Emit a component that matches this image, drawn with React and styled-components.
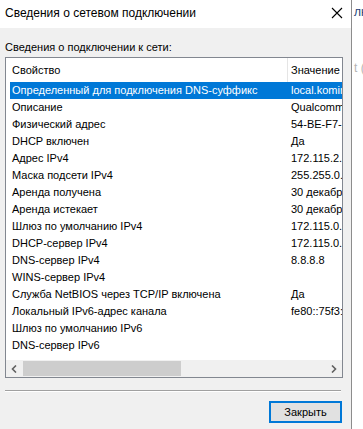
import React from 'react';
import styled, { createGlobalStyle } from 'styled-components';

const GlobalStyle = createGlobalStyle`
  html, body {
    margin: 0;
    padding: 0;
    background: #ffffff;
    overflow: hidden;
  }
  body {
    font-family: "Liberation Sans", Arial, sans-serif;
    font-size: 11px;
    color: #000;
  }
`;

const Page = styled.div`
  display: flex;
  width: 363px;
  height: 429px;
  background: #ffffff;
`;

const Dialog = styled.div`
  width: 352px;
  height: 429px;
  flex-shrink: 0;
  display: flex;
  flex-direction: column;
  background: #f0f0f0;
  border-right: 1px solid #8c8c8c;
  box-sizing: border-box;
`;

const TitleBar = styled.div`
  height: 28px;
  flex-shrink: 0;
  display: flex;
  align-items: center;
  justify-content: space-between;
  padding: 0 8px 2px 5px;
  box-sizing: border-box;
  background: #ffffff;
`;

const Title = styled.span`
  font-size: 12px;
  color: #000;
`;

const Body = styled.div`
  flex: 1;
  display: flex;
  flex-direction: column;
  padding: 12px 8px 0 5px;
`;

const Label = styled.div`
  line-height: 14px;
  margin-bottom: 3px;
`;

const ListBox = styled.div`
  width: 338px;
  height: 321px;
  box-sizing: border-box;
  border: 1px solid #828790;
  background: #ffffff;
  display: flex;
  flex-direction: column;
  overflow: hidden;
`;

const Header = styled.div`
  height: 24px;
  flex-shrink: 0;
  display: flex;
  align-items: center;
  padding-left: 4px;
`;

const Cell = styled.div`
  flex-shrink: 0;
  white-space: nowrap;
  overflow: hidden;
  box-sizing: border-box;
  width: ${({ wide }) => (wide ? '278px' : '160px')};
  padding-left: ${({ wide }) => (wide ? '2px' : '3px')};
`;

const HeaderCell = styled(Cell)`
  height: 24px;
  line-height: 24px;
  border-right: ${({ wide }) => (wide ? '1px solid #e5e5e5' : 'none')};
`;

const Rows = styled.div`
  flex: 1;
  overflow: hidden;
  padding-left: 4px;
`;

const Row = styled.div`
  display: flex;
  height: 17px;
  line-height: 17px;
  width: 500px;
  background: ${({ selected }) => (selected ? '#0078d7' : 'transparent')};
  color: ${({ selected }) => (selected ? '#ffffff' : '#000000')};
`;

const ScrollBar = styled.div`
  height: 17px;
  flex-shrink: 0;
  display: flex;
  align-items: center;
  background: #f0f0f0;
`;

const ScrollArrow = styled.div`
  width: 17px;
  height: 17px;
  display: flex;
  align-items: center;
  justify-content: center;
`;

const Track = styled.div`
  flex: 1;
  height: 17px;
  display: flex;
  align-items: center;
`;

const Thumb = styled.div`
  width: 158px;
  height: 15px;
  background: #cdcdcd;
`;

const Separator = styled.div`
  width: 336px;
  height: 1px;
  margin-top: 12px;
  background: #a0a0a0;
  border-bottom: 1px solid #ffffff;
`;

const Footer = styled.div`
  display: flex;
  justify-content: flex-end;
  padding-top: 9px;
  padding-right: 1px;
`;

const Button = styled.button`
  width: 73px;
  height: 22px;
  box-sizing: border-box;
  border: 2px solid #0078d7;
  background: #e1e1e1;
  font-family: inherit;
  font-size: 11px;
  color: #000;
  padding: 0;
`;

const Behind = styled.div`
  flex: 1;
  overflow: hidden;
  display: flex;
  flex-direction: column;
  padding-left: 2px;
  white-space: nowrap;
`;

const BehindText = styled.span`
  font-size: 12px;
  margin-top: ${({ top }) => top}px;
  color: ${({ faded }) => (faded ? '#b4b4b4' : '#1c3f75')};
`;

const rows = [
  ['Определенный для подключения DNS-суффикс', 'local.kominet.ru'],
  ['Описание', 'Qualcomm Atheros QCA9377'],
  ['Физический адрес', '54-BE-F7-2A-91-0C'],
  ['DHCP включен', 'Да'],
  ['Адрес IPv4', '172.115.2.148'],
  ['Маска подсети IPv4', '255.255.0.0'],
  ['Аренда получена', '30 декабря 2019 г. 9:41:12'],
  ['Аренда истекает', '30 декабря 2019 г. 21:41:12'],
  ['Шлюз по умолчанию IPv4', '172.115.0.1'],
  ['DHCP-сервер IPv4', '172.115.0.1'],
  ['DNS-сервер IPv4', '8.8.8.8'],
  ['WINS-сервер IPv4', ''],
  ['Служба NetBIOS через TCP/IP включена', 'Да'],
  ['Локальный IPv6-адрес канала', 'fe80::75f3:1a2b:9c4d:e5f6%12'],
  ['Шлюз по умолчанию IPv6', ''],
  ['DNS-сервер IPv6', ''],
];

const CloseIcon = () => (
  <svg width="12" height="12" viewBox="0 0 12 12">
    <path d="M1 1 L11 11 M11 1 L1 11" stroke="#000" strokeWidth="1.1" fill="none" />
  </svg>
);

const Chevron = ({ dir }) => (
  <svg width="7" height="8" viewBox="0 0 7 8">
    <path
      d={dir === 'left' ? 'M5 0.5 L1.5 4 L5 7.5' : 'M2 0.5 L5.5 4 L2 7.5'}
      stroke="#606060"
      strokeWidth="1.6"
      fill="none"
    />
  </svg>
);

export default function App() {
  return (
    <Page>
      <GlobalStyle />
      <Dialog>
        <TitleBar>
          <Title>Сведения о сетевом подключении</Title>
          <CloseIcon />
        </TitleBar>
        <Body>
          <Label>Сведения о подключении к сети:</Label>
          <ListBox>
            <Header>
              <HeaderCell wide>Свойство</HeaderCell>
              <HeaderCell>Значение</HeaderCell>
            </Header>
            <Rows>
              {rows.map(([name, value], index) => (
                <Row key={name} selected={index === 0}>
                  <Cell wide>{name}</Cell>
                  <Cell>{value}</Cell>
                </Row>
              ))}
            </Rows>
            <ScrollBar>
              <ScrollArrow>
                <Chevron dir="left" />
              </ScrollArrow>
              <Track>
                <Thumb />
              </Track>
              <ScrollArrow>
                <Chevron dir="right" />
              </ScrollArrow>
            </ScrollBar>
          </ListBox>
          <Separator />
          <Footer>
            <Button>Закрыть</Button>
          </Footer>
        </Body>
      </Dialog>
      <Behind>
        <BehindText top={5}>лн</BehindText>
        <BehindText top={42} faded>t (</BehindText>
      </Behind>
    </Page>
  );
}
